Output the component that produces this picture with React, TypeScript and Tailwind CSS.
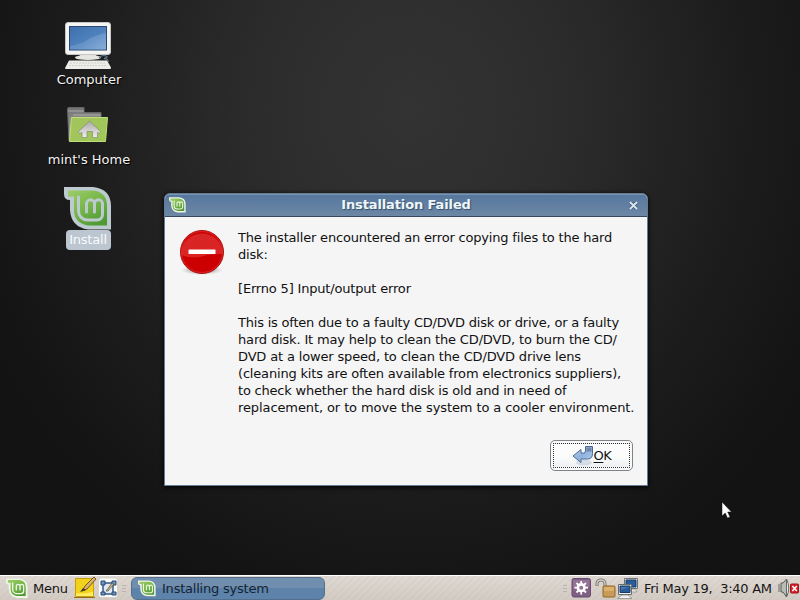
import React from "react";

function MintLogo({ size, rim = "#eef5e6", id }: { size: number; rim?: string; id: string }) {
  return (
    <svg width={size} height={size} viewBox="0 0 48 48" className="block shrink-0">
      <defs>
        <linearGradient id={id} x1="0" y1="0" x2="0.7" y2="1">
          <stop offset="0" stopColor="#9fcd6a" />
          <stop offset="0.5" stopColor="#79b84a" />
          <stop offset="1" stopColor="#4f9a35" />
        </linearGradient>
      </defs>
      <path d="M0 1H29Q47 3 47 20V43.500H24Q7 41 6 24V14Q0 14 0 8Z" fill={rim} />
      <path d="M4 4.500H29Q43 6 43 20V39.500H24Q10 37 10 24V10.500H4Z" fill={`url(#${id})`} />
      <path
        d="M14.500 11V25A9 9 0 0 0 23.500 34H33A5.500 5.500 0 0 0 38.500 28.500V17.800A4 4 0 0 0 30.500 17.800V26M30.500 17.800A4 4 0 0 0 22.500 17.800V26"
        fill="none"
        stroke={rim}
        strokeWidth="3"
        strokeLinecap="round"
      />
    </svg>
  );
}

function ComputerIcon() {
  return (
    <svg width="50" height="50" viewBox="0 0 50 50" className="block">
      <defs>
        <linearGradient id="screen" x1="0" y1="0" x2="1" y2="1">
          <stop offset="0" stopColor="#3d6fae" />
          <stop offset="0.550" stopColor="#4f82bd" />
          <stop offset="1" stopColor="#8eb2da" />
        </linearGradient>
      </defs>
      <path d="M18 34H32L36 39H14Z" fill="#dcdcd8" />
      <rect x="2.500" y="2.500" width="45" height="32" rx="2.500" fill="#f5f5f3" stroke="#c6c7c5" />
      <rect x="6.500" y="6.500" width="37" height="23.500" fill="url(#screen)" stroke="#28486f" />
      <path d="M7 26Q18 24 24 20T43 13V29.500H7Z" fill="#86add8" opacity=".4" />
      <ellipse cx="25" cy="37.500" rx="13" ry="2.500" fill="#e5e5e1" />
      <path d="M36 38Q40 34 43 36Q46 37 41 38.500Q46 39 45 42" fill="none" stroke="#5b7288" strokeWidth="1.300" />
      <path d="M6 40.500H44L48 47.500Q48 49 47 49H3Q2 49 2 48Z" fill="#ecece8" />
      <path d="M7 43H43M6 45.500H31M32 45.500H44" stroke="#c9cac6" strokeWidth="0.800" strokeDasharray="2 1" />
    </svg>
  );
}

function HomeIcon() {
  return (
    <svg width="44" height="40" viewBox="0 0 44 40" className="block">
      <defs>
        <linearGradient id="folderBack" x1="0" y1="0" x2="0" y2="1">
          <stop offset="0" stopColor="#727272" />
          <stop offset="1" stopColor="#b0b0ae" />
        </linearGradient>
        <linearGradient id="folder" x1="0" y1="0" x2="1" y2="1">
          <stop offset="0" stopColor="#a3c35e" />
          <stop offset="1" stopColor="#9fc957" />
        </linearGradient>
        <linearGradient id="house" x1="0" y1="0" x2="0" y2="1">
          <stop offset="0" stopColor="#a9aaa7" />
          <stop offset="1" stopColor="#eeeeec" />
        </linearGradient>
      </defs>
      <path d="M0.500 3Q0.500 1.500 2 1.500H17V6.500H34V15H6L4 35H2Z" fill="url(#folderBack)" stroke="#666" />
      <path d="M1 5H17M6 9H34" stroke="#c0c0be" strokeWidth="0.700" />
      <path d="M4.500 11.500H40.500L38.500 35.500H2.500Z" fill="url(#folder)" stroke="#c2dd7b" />
      <path d="M22.500 15L33.500 25.500L32.500 27.500L30.500 26.500V31.500H25.500V25.500H20V31.500H15V26.500L12.500 27.500L11.500 25.500Z" fill="url(#house)" stroke="#858b76" strokeWidth="0.700" />
    </svg>
  );
}

function StopIcon() {
  return (
    <svg width="48" height="50" viewBox="0 0 48 50" className="block">
      <defs>
        <radialGradient id="shade">
          <stop offset="0.300" stopColor="#777" />
          <stop offset="1" stopColor="#999" stopOpacity="0" />
        </radialGradient>
        <linearGradient id="gloss" x1="0" y1="0" x2="0" y2="1">
          <stop offset="0" stopColor="#d92c2c" />
          <stop offset="1" stopColor="#e02a2a" />
        </linearGradient>
      </defs>
      <ellipse cx="24" cy="42" rx="21" ry="5" fill="url(#shade)" opacity=".7" />
      <circle cx="24" cy="24" r="21.500" fill="#cc0000" stroke="#b01010" />
      <path d="M3 27A21 21 0 1 1 45 26Q32 25.500 24 28.500Q13 31 3 27Z" fill="url(#gloss)" opacity=".85" />
      <circle cx="24" cy="24" r="20.500" fill="none" stroke="#e03a3a" strokeWidth="0.600" />
      <rect x="10.500" y="21.500" width="27" height="4.500" rx="0.500" fill="#fff" />
    </svg>
  );
}

function ReturnIcon() {
  return (
    <svg width="22" height="21" viewBox="0 0 22 21" className="block">
      <defs>
        <linearGradient id="arrow" x1="0" y1="0" x2="1" y2="1">
          <stop offset="0" stopColor="#c5d9f0" />
          <stop offset="0.500" stopColor="#8fb1dd" />
          <stop offset="1" stopColor="#b8cfed" />
        </linearGradient>
      </defs>
      <ellipse cx="12" cy="17.500" rx="8" ry="3" fill="#8ba0bd" opacity=".3" />
      <path d="M1 11L9 4.500V8H11.500Q13.500 8 13.500 6V1.500H20.500V8.500Q20.500 14 15.500 14H9V17.500Z" fill="url(#arrow)" stroke="#4a6894" />
      <path d="M14.500 2.500H19.500V6.500H14.500Z" fill="#7186a8" />
    </svg>
  );
}

function NotesIcon() {
  return (
    <svg width="22" height="22" viewBox="0 0 22 22" className="block shrink-0">
      <path d="M1.500 1.500H19.500V19.500H1.500Z" fill="#f3d21b" stroke="#c99e0b" />
      <path d="M2 16.500Q11 17 19 15V19H2Z" fill="#ffed65" />
      <path d="M0 20.500H21" stroke="#916b23" />
      <path d="M20 0L11 9L8.500 14L13 12L22 2Z" fill="#d8b46d" stroke="#68471b" strokeWidth="0.900" />
      <path d="M6 15L9 11L12 13Z" fill="#3f3b31" />
    </svg>
  );
}

function DesktopIcon() {
  return (
    <svg width="21" height="22" viewBox="0 0 21 22" className="block shrink-0">
      <rect x="0.500" y="1" width="19" height="19.500" rx="3" fill="#fcfcfa" stroke="#d4d0ca" />
      <path d="M5 6H15V17H5Z" fill="#dfe9f3" stroke="#355885" strokeWidth="1.500" />
      <path d="M3 4H7V8H3ZM14 4H18V8H14ZM3 15H7V18H3ZM14 15H18V18H14Z" fill="#6f94c3" stroke="#284a75" />
      <path d="M8 14L14 6L16 7L10 14Z" fill="#c9b17a" stroke="#595145" strokeWidth="0.700" />
    </svg>
  );
}

function GearIcon() {
  return (
    <svg width="21" height="20" viewBox="0 0 21 20" className="block shrink-0">
      <rect x="1" y="0.500" width="18.500" height="18.500" rx="2" fill="#806083" stroke="#674b70" />
      <path d="M2 2H18.500V9Q9 14 2 11Z" fill="#b898b4" opacity=".35" />
      <circle cx="10.200" cy="9.700" r="3.300" fill="none" stroke="#fff" strokeWidth="2.600" />
      <path d="M10.200 3V6M10.200 13.500V16.500M3.500 9.700H6.500M14 9.700H17M5.500 5L7.500 7M13 12.500L15 14.500M15 5L13 7M7.500 12.500L5.500 14.500" stroke="#fff" strokeWidth="1.800" />
    </svg>
  );
}

function LockIcon() {
  return (
    <svg width="22" height="21" viewBox="0 0 22 21" className="block shrink-0">
      <path d="M2 8V6Q2 2 6 2T10 6V10" fill="none" stroke="#72736b" strokeWidth="3" />
      <path d="M2 7.500V6Q2 2 6 2T10 6V9" fill="none" stroke="#d1d1c5" strokeWidth="1.300" />
      <rect x="8" y="8" width="12" height="11" rx="1" fill="#c99b58" stroke="#936422" />
      <path d="M9 9H19V13H9Z" fill="#e6c07b" opacity=".6" />
    </svg>
  );
}

function NetworkIcon() {
  return (
    <svg width="22" height="22" viewBox="0 0 22 22" className="block shrink-0">
      <path d="M7.500 0.500H20.500V10.500H7.500Z" fill="#e5e8e4" stroke="#6f7270" />
      <path d="M9 2H19V9H9Z" fill="#2a5c9a" stroke="#173c69" />
      <path d="M14 11H18L20 14H14Z" fill="#e3e4df" stroke="#777" strokeWidth="0.500" />
      <path d="M1.500 6.500H14.500V16.500H1.500Z" fill="#eef0ed" stroke="#696c6b" />
      <path d="M3 8H13V14.500H3Z" fill="#2a5c9a" stroke="#173c69" />
      <path d="M4 9H12L4 12Z" fill="#6b92bf" opacity=".5" />
      <path d="M5 17H11L15 20.500H0.500Z" fill="#eeefec" stroke="#83847f" strokeWidth="0.700" />
    </svg>
  );
}

function MutedIcon() {
  return (
    <svg width="22" height="21" viewBox="0 0 22 21" className="block shrink-0">
      <path d="M3 5H5L8.500 1V19L5 14H3Z" fill="#b9bdb6" stroke="#555b55" />
      <path d="M1 6V14" stroke="#8b8e86" strokeWidth="1.500" />
      <path d="M8.500 1Q13 10 8.500 19Z" fill="#eeeee9" stroke="#626862" />
      <rect x="12.500" y="6" width="8" height="9" rx="1" fill="#d42028" stroke="#a90e18" />
      <path d="M14.300 8L18.800 13M18.800 8L14.300 13" stroke="#fff" strokeWidth="1.600" />
    </svg>
  );
}

function Grip() {
  return (
    <div className="flex w-1 shrink-0 flex-col gap-[2px]">
      <i className="h-px bg-[#bcb5af]" />
      <i className="h-px bg-[#bcb5af]" />
      <i className="h-px bg-[#bcb5af]" />
    </div>
  );
}

const message = [
  { text: "The installer encountered an error copying files to the hard", tracking: "tracking-[-0.185px]" },
  { text: "disk:", tracking: "tracking-[-0.18px]" },
  { text: "", tracking: "" },
  { text: "[Errno 5] Input/output error", tracking: "tracking-[-0.18px]" },
  { text: "", tracking: "" },
  { text: "This is often due to a faulty CD/DVD disk or drive, or a faulty", tracking: "tracking-[-0.21px]" },
  { text: "hard disk. It may help to clean the CD/DVD, to burn the CD/", tracking: "tracking-[-0.16px]" },
  { text: "DVD at a lower speed, to clean the CD/DVD drive lens", tracking: "tracking-[-0.155px]" },
  { text: "(cleaning kits are often available from electronics suppliers),", tracking: "tracking-[-0.18px]" },
  { text: "to check whether the hard disk is old and in need of", tracking: "tracking-[-0.2px]" },
  { text: "replacement, or to move the system to a cooler environment.", tracking: "tracking-[-0.1px]" },
];

function Dialog() {
  return (
    <section className="absolute left-[164px] top-[193px] flex h-[293px] w-[484px] flex-col overflow-hidden rounded-t-[6px] border border-[#637b93] bg-[#f5f5f6] shadow-[0_1px_5px_#000] [text-shadow:none]">
      <header className="flex h-[23px] shrink-0 items-center border-b border-[#38465f] bg-gradient-to-b from-[#55779e] to-[#6d87a5] pl-1 pr-[9px] shadow-[inset_0_1px_#7994af]">
        <MintLogo size={17} id="titleMint" />
        <h1 className="flex-1 pr-[3px] text-center text-[13px] font-bold leading-[20px] tracking-[-0.12px] text-[#edf7fc] [text-shadow:1px_1px_1px_#354e6b]">Installation Failed</h1>
        <button aria-label="Close">
          <svg width="9" height="9" viewBox="0 0 9 9" className="block">
            <path d="M1.500 1.500L7.500 7.500M7.500 1.500L1.500 7.500" stroke="#405873" strokeWidth="3.200" />
            <path d="M1 1L8 8M8 1L1 8" stroke="#d9e5ef" strokeWidth="1.900" />
          </svg>
        </button>
      </header>
      <div className="flex pl-[13px] pt-[11px]">
        <StopIcon />
        <div className="pl-3 pt-px text-[13px] leading-[17px] text-[#111]">
          {message.map(({ text, tracking }, index) => (
            <p key={index} className={`h-[17px] whitespace-nowrap ${tracking}`}>{text}</p>
          ))}
        </div>
      </div>
      <footer className="mt-auto flex justify-end pb-[14px] pr-[14px]">
        <button className="flex h-[31px] w-[83px] rounded-[5px] border-[1.500px] border-[#808285] bg-[#f8f9fa] p-[2px]">
          <span className="flex flex-1 items-center justify-center border border-dotted border-[#333] bg-gradient-to-b from-[#fcfcfc] from-50% to-[#eef1f2] pb-px text-[13px] leading-[17px] tracking-[-0.4px] text-[#111]">
            <ReturnIcon />
            <span><u className="underline-offset-2">O</u>K</span>
          </span>
        </button>
      </footer>
    </section>
  );
}

export default function App() {
  return (
    <main className="relative flex h-[600px] w-[800px] select-none flex-col overflow-hidden bg-[#111] [font-family:'DejaVu_Sans',sans-serif]">
      <div className="relative flex-1 bg-[repeating-linear-gradient(60deg,rgba(0,0,0,.05)_0px,rgba(0,0,0,.05)_1px,transparent_1px,transparent_3px),radial-gradient(ellipse_470px_520px_at_410px_110px,#343434_0%,#2c2c2c_35%,#1b1b1b_75%,#131313_100%)] text-[13px] leading-[17px] text-[#f3f3f3] [text-shadow:1px_1px_1px_#000]">
        <div className="absolute left-[39px] top-[20px] flex w-[100px] flex-col items-center">
          <div className="-ml-[2px]"><ComputerIcon /></div>
          <span className="mt-px">Computer</span>
        </div>
        <div className="absolute left-[39px] top-[106px] flex w-[100px] flex-col items-center">
          <HomeIcon />
          <span className="mt-[5px] whitespace-nowrap">mint's Home</span>
        </div>
        <div className="absolute left-[38px] top-[186px] flex w-[100px] flex-col items-center">
          <MintLogo size={48} rim="#bdcad0" id="desktopMint" />
          <span className="mt-[-4px] flex h-5 w-[45px] items-center justify-center rounded-[4px] bg-[#bcc6d1] pb-px tracking-[-0.2px] text-[#f8fafc] [text-shadow:none]">Install</span>
        </div>
        <Dialog />
        <svg width="11" height="19" viewBox="0 0 11 19" className="absolute left-[721px] top-[501px]">
          <path d="M1 1V15L4.200 12L6.500 17L9 16L6.700 11H10.500Z" fill="#fff" stroke="#111" strokeWidth="0.500" />
        </svg>
      </div>
      <nav className="flex h-[25px] shrink-0 items-center border-t border-white bg-[repeating-linear-gradient(135deg,rgba(120,95,75,.04)_0px,rgba(120,95,75,.04)_2px,transparent_2px,transparent_5px),linear-gradient(to_bottom,#dfd9d3,#d3cbc3)] pl-[6px] text-[13px] leading-[17px] text-[#151515]">
        <div className="pt-[2px]"><MintLogo size={22} id="menuMint" /></div>
        <span className="ml-[5px] w-[41px] tracking-[-0.2px]">Menu</span>
        <NotesIcon />
        <div className="ml-[2px]"><DesktopIcon /></div>
        <div className="ml-[3px]"><Grip /></div>
        <button className="ml-[5px] flex h-[23px] w-[194px] items-center rounded-[6px] border border-[#526f8e] bg-gradient-to-b from-[#718eae] from-45% to-[#5e83aa] to-50% pl-[6px] text-[#132333]">
          <div className="pt-px"><MintLogo size={18} id="taskMint" /></div>
          <span className="ml-[6px] tracking-[-0.22px]">Installing system</span>
        </button>
        <div className="ml-auto flex items-center">
          <Grip />
          <div className="ml-1 flex pt-[2px]">
            <GearIcon />
            <div className="ml-[3px]"><LockIcon /></div>
            <NetworkIcon />
          </div>
          <time className="ml-[5px] w-[129px] shrink-0 whitespace-pre tracking-[-0.26px]">Fri May 19,  3:40 AM</time>
          <div className="ml-[5px]"><MutedIcon /></div>
        </div>
      </nav>
    </main>
  );
}
